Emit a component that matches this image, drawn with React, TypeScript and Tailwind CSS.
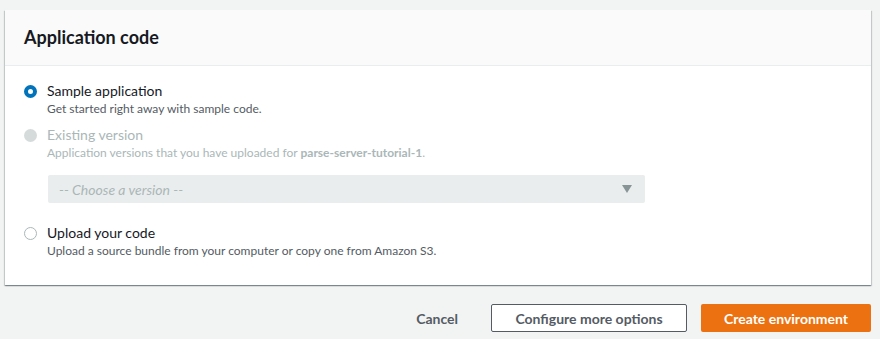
import React from "react";

const font = { fontFamily: "Lato, 'Open Sans', sans-serif" };

const Radio = ({ state }: { state: "checked" | "disabled" | "empty" }) => {
	if (state === "checked")
		return <span className="block w-[13px] h-[13px] rounded-full border-[4px] border-[#0073bb] bg-white" />;
	if (state === "disabled") return <span className="block w-[13px] h-[13px] rounded-full bg-[#d5dbdb]" />;
	return <span className="block w-[13px] h-[13px] rounded-full border border-[#aab7b8] bg-white" />;
};

const App = () => {
	return (
		<div className="w-[880px] h-[339px] bg-[#f2f3f3] pt-[10px] pl-[5px] pr-[9px]" style={font}>
			<div className="bg-white shadow-[0_1px_1px_0_rgba(0,28,36,0.3),1px_1px_1px_0_rgba(0,28,36,0.15),-1px_1px_1px_0_rgba(0,28,36,0.15)]">
				<div className="h-[56px] bg-[#fafafa] border-b border-[#eaeded] flex items-center px-[19px]">
					<h2 className="text-[18px] font-bold text-[#16191f] leading-none -mt-[2px]">Application code</h2>
				</div>
				<div className="pt-[15px] pb-[26px] pl-[19px] pr-6">
					<div className="flex gap-[10px]">
						<div className="pt-[4px]">
							<Radio state="checked" />
						</div>
						<div>
							<div className="text-[14px] leading-[20px] text-[#16191f]">Sample application</div>
							<div className="text-[12px] leading-[16px] text-[#545b64]">Get started right away with sample code.</div>
						</div>
					</div>
					<div className="flex gap-[10px] mt-[8px]">
						<div className="pt-[4px]">
							<Radio state="disabled" />
						</div>
						<div>
							<div className="text-[14px] leading-[20px] text-[#aab7b8]">Existing version</div>
							<div className="text-[12px] leading-[16px] text-[#aab7b8]">
								Application versions that you have uploaded for{" "}
								<span className="font-bold">parse-server-tutorial-1</span>.
							</div>
							<div className="mt-[14px] ml-px w-[597px] h-[28px] bg-[#eaeded] rounded-[2px] flex items-center justify-between pl-[11px] pr-[13px]">
								<span className="text-[14px] italic text-[#aab7b8]">-- Choose a version --</span>
								<svg width="10" height="8" viewBox="0 0 10 8">
									<path d="M0 0 L10 0 L5 8 Z" fill="#879596" />
								</svg>
							</div>
						</div>
					</div>
					<div className="flex gap-[10px] mt-[20px]">
						<div className="pt-[4px]">
							<Radio state="empty" />
						</div>
						<div>
							<div className="text-[14px] leading-[20px] text-[#16191f]">Upload your code</div>
							<div className="text-[12px] leading-[16px] text-[#545b64]">
								Upload a source bundle from your computer or copy one from Amazon S3.
							</div>
						</div>
					</div>
				</div>
			</div>
			<div className="flex justify-end items-center mt-[19px]">
				<button className="text-[14px] font-bold text-[#545b64] mr-[33px]">Cancel</button>
				<button className="w-[196px] h-[28px] border border-[#545b64] bg-white rounded-[2px] text-[14px] font-bold text-[#545b64] mr-[14px]">
					Configure more options
				</button>
				<button className="w-[170px] h-[28px] bg-[#ec7211] rounded-[2px] text-[14px] font-bold text-white">
					Create environment
				</button>
			</div>
		</div>
	);
};

export default App;
